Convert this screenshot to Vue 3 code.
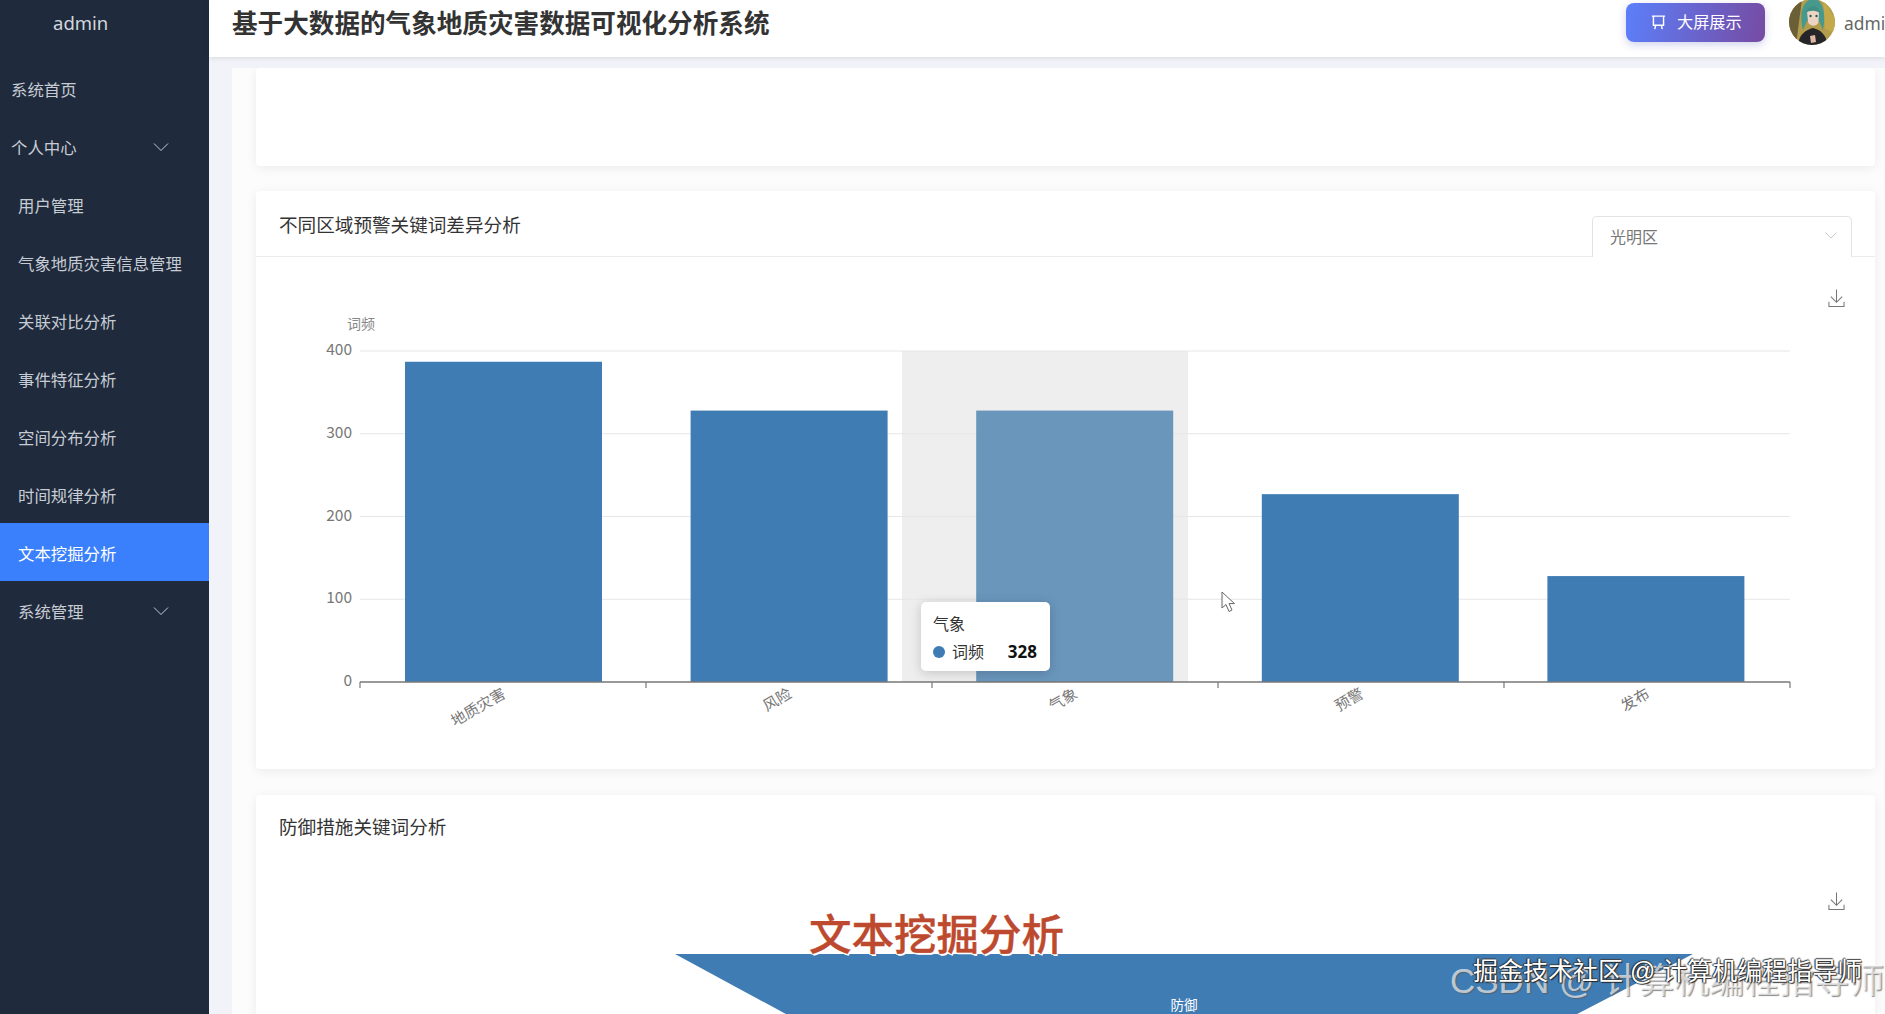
<template>
    <div class="layout">
        <aside class="sidebar">
            <div class="brand">admin</div>
            <ul class="menu">
                <li v-for="item in menuList" :key="item.text" class="menu-item"
                    :class="{ active: item.active, top: item.top }">
                    <span>{{ item.text }}</span>
                    <svg v-if="item.arrow" class="arrow" viewBox="0 0 16 10">
                        <path d="M1 1.5 L8 8.5 L15 1.5" fill="none" stroke="currentColor" stroke-width="1" />
                    </svg>
                </li>
            </ul>
        </aside>

        <div class="main">
            <header class="topbar">
                <h1 class="system-title">基于大数据的气象地质灾害数据可视化分析系统</h1>
                <div class="topbar-right">
                    <button class="screen-btn">
                        <svg class="screen-icon" viewBox="0 0 16 16">
                            <path d="M1 1.2 H15 M2.6 1.2 V11 H13.4 V1.2 M5 11 L4 15 M11 11 L12 15" fill="none"
                                stroke="#fff" stroke-width="1.5" />
                        </svg>
                        <span>大屏展示</span>
                    </button>
                    <svg class="avatar" viewBox="0 0 46 46">
                        <defs>
                            <clipPath id="avatar-clip">
                                <circle cx="23" cy="23" r="23" />
                            </clipPath>
                        </defs>
                        <g clip-path="url(#avatar-clip)">
                            <rect width="46" height="46" fill="#b39c4c" />
                            <path d="M0 0 H13 L7 46 H0 Z" fill="#6b5f38" />
                            <path d="M34 0 L46 20 V34 L36 30 Z" fill="#c4a94a" />
                            <path d="M14 31 C10 16 13 1 24 0 C35 0 37 16 34 31 L30 22 H18 Z" fill="#46998c" />
                            <path d="M18 12 C20 8 28 8 30 13 L29.5 23 C28 28 21 28 19 23 Z" fill="#ecd3c4" />
                            <path d="M16 14 C20 5 29 5 32 15 C27 11 22 11 16 14 Z" fill="#3f8f84" />
                            <circle cx="21.5" cy="17" r="1.2" fill="#2d5c55" />
                            <circle cx="27.5" cy="17" r="1.2" fill="#2d5c55" />
                            <path d="M9 46 C10 35 17 31 24 29 C32 31 37 36 39 46 Z" fill="#25252a" />
                            <path d="M21 37 L26 36 L27 43 L22 44 Z" fill="#dfb9a6" />
                        </g>
                    </svg>
                    <span class="username">admin</span>
                </div>
            </header>

            <div class="content">
                <div class="panel">
                    <section class="card card-empty"></section>

                    <section class="card card-bar">
                        <div class="card-header">
                            <span class="card-title">不同区域预警关键词差异分析</span>
                            <div class="select">
                                <span>光明区</span>
                                <svg class="select-arrow" viewBox="0 0 12 7">
                                    <path d="M0.5 0.5 L6 6 L11.5 0.5" fill="none" stroke="#c8c8c8" stroke-width="1" />
                                </svg>
                            </div>
                        </div>
                        <div class="chart">
                            <svg class="download" viewBox="0 0 18 19">
                                <path d="M9 0 V13 M3 7.5 L9 13.5 L15 7.5 M1 13 V18 H17 V13" fill="none"
                                    stroke="#777" stroke-width="1.1" />
                            </svg>
                            <svg class="bar-svg" width="1619" height="511" viewBox="0 0 1619 511">
                                <rect :x="646" :y="yOf(400)" width="286" :height="yOf(0) - yOf(400)" fill="#eeeeee" />
                                <line v-for="tick in ticks.slice(1)" :key="tick" :x1="axisLeft" :x2="axisRight"
                                    :y1="yOf(tick)" :y2="yOf(tick)" stroke="#e6e6e6" stroke-width="1" />
                                <text v-for="tick in ticks" :key="'y' + tick" :x="axisLeft - 8" :y="yOf(tick)"
                                    text-anchor="end" dominant-baseline="middle" class="axis-label">{{ tick }}</text>
                                <text x="105" y="68" text-anchor="middle" dominant-baseline="middle"
                                    class="axis-name">词频</text>
                                <rect v-for="(bar, index) in barList" :key="bar.name"
                                    :x="149 + index * barStep" :y="yOf(bar.value)" width="197"
                                    :height="yOf(0) - yOf(bar.value)" :fill="bar.active ? '#6a96bc' : '#3f7cb3'" />
                                <line :x1="axisLeft" :x2="axisRight" :y1="yOf(0)" :y2="yOf(0)" stroke="#777"
                                    stroke-width="1.4" />
                                <line v-for="n in 6" :key="'t' + n" :x1="axisLeft + (n - 1) * bandWidth"
                                    :x2="axisLeft + (n - 1) * bandWidth" :y1="yOf(0)" :y2="yOf(0) + 6" stroke="#777"
                                    stroke-width="1.2" />
                                <text v-for="(bar, index) in barList" :key="'x' + bar.name"
                                    :x="labelX(index)" :y="yOf(0) + 3" text-anchor="end"
                                    dominant-baseline="hanging" class="axis-label x-label"
                                    :transform="`rotate(-30 ${labelX(index)} ${yOf(0) + 3})`">{{ bar.name }}</text>
                            </svg>
                            <div class="tooltip">
                                <div class="tooltip-title">气象</div>
                                <div class="tooltip-row">
                                    <i class="tooltip-dot"></i>
                                    <span>词频</span>
                                    <b>328</b>
                                </div>
                            </div>
                            <svg class="cursor" viewBox="0 0 15 22">
                                <path d="M1 1 V17 L5 13.5 L8 20.5 L11 19 L8 12.6 H13.5 Z" fill="#fff" stroke="#666"
                                    stroke-width="1" />
                            </svg>
                        </div>
                    </section>

                    <section class="card card-funnel">
                        <div class="card-header plain">
                            <span class="card-title">防御措施关键词分析</span>
                        </div>
                        <div class="chart">
                            <svg class="download" viewBox="0 0 18 19">
                                <path d="M9 0 V13 M3 7.5 L9 13.5 L15 7.5 M1 13 V18 H17 V13" fill="none"
                                    stroke="#777" stroke-width="1.1" />
                            </svg>
                            <svg class="funnel-svg" width="1619" height="300" viewBox="0 0 1619 300">
                                <polygon points="419,94 1437,94 1157,239 687,239" fill="#3f7cb3" />
                                <text x="928" y="146" text-anchor="middle" dominant-baseline="middle"
                                    class="funnel-label">防御</text>
                            </svg>
                        </div>
                    </section>
                </div>
            </div>
        </div>

        <div class="video-caption">文本挖掘分析</div>
        <div class="mark mark-csdn">CSDN @ 计算机编程指导师</div>
        <div class="mark mark-juejin">掘金技术社区 @ 计算机编程指导师</div>
    </div>
</template>

<script setup>
import { ref } from 'vue'

const menuList = ref([
    { text: '系统首页', top: true },
    { text: '个人中心', top: true, arrow: true },
    { text: '用户管理' },
    { text: '气象地质灾害信息管理' },
    { text: '关联对比分析' },
    { text: '事件特征分析' },
    { text: '空间分布分析' },
    { text: '时间规律分析' },
    { text: '文本挖掘分析', active: true },
    { text: '系统管理', arrow: true },
])

const barList = ref([
    { name: '地质灾害', value: 387 },
    { name: '风险', value: 328 },
    { name: '气象', value: 328, active: true },
    { name: '预警', value: 227 },
    { name: '发布', value: 128 },
])

const ticks = [0, 100, 200, 300, 400]
const axisLeft = 104
const axisRight = 1534
const bandWidth = 286
const barStep = 285.6

// 图表内坐标: 0 轴 y=425, 400 轴 y=94
const yOf = (value) => 425 - (value / 400) * 331
const labelX = (index) => axisLeft + bandWidth / 2 - 3 + index * bandWidth
</script>

<style scoped>
.layout {
    position: relative;
    display: flex;
    width: 1885px;
    height: 1014px;
    overflow: hidden;
    font-family: "Noto Sans CJK SC", "Noto Sans", sans-serif;
}

.sidebar {
    flex: 0 0 209px;
    min-width: 0;
    background: #1f2a3c;
    color: #c7ccd4;
}

.brand {
    height: 59px;
    padding: 9px 0 0 53px;
    box-sizing: border-box;
    font-family: "Noto Sans", sans-serif;
    font-size: 18.5px;
    line-height: 28px;
    color: #d3d7de;
}

.menu {
    list-style: none;
    margin: 0;
    padding: 0;
}

.menu-item {
    display: flex;
    align-items: center;
    justify-content: space-between;
    height: 58px;
    box-sizing: border-box;
    padding: 1px 40px 0 18px;
    font-size: 16.4px;
    white-space: nowrap;
}

.menu-item.top {
    padding-left: 11px;
}

.menu-item.active {
    background: #3a7ffb;
    color: #fff;
}

.arrow {
    width: 16px;
    height: 10px;
}

.main {
    flex: 1;
    min-width: 0;
    display: flex;
    flex-direction: column;
    background: #f1f3f8;
}

.topbar {
    flex: 0 0 57px;
    display: flex;
    align-items: flex-start;
    justify-content: space-between;
    background: #fff;
    box-shadow: 0 1px 5px rgba(0, 0, 0, 0.1);
    position: relative;
    z-index: 1;
    overflow: hidden;
}

.system-title {
    margin: 4px 0 0 23px;
    font-size: 25.6px;
    line-height: 36px;
    font-weight: 700;
    color: #333;
}

.topbar-right {
    flex: 0 0 259px;
    min-width: 0;
    display: flex;
    align-items: flex-start;
    padding-top: 3px;
    box-sizing: border-box;
    white-space: nowrap;
}

.screen-btn {
    display: flex;
    flex: none;
    align-items: center;
    gap: 11px;
    width: 139px;
    height: 39px;
    margin-right: 24px;
    padding: 0 0 3px 25px;
    border: none;
    border-radius: 8px;
    background: linear-gradient(100deg, #5c7ffa, #764ba2);
    box-shadow: 0 3px 8px rgba(102, 110, 200, 0.3);
    color: #fff;
    font-family: inherit;
    font-size: 16.2px;
}

.screen-icon {
    width: 15px;
    height: 15px;
    flex: none;
    margin-top: 3px;
}

.avatar {
    flex: none;
    width: 46px;
    height: 46px;
    margin-top: -4px;
}

.username {
    margin: 7px 0 0 9px;
    font-family: "Noto Sans", sans-serif;
    font-size: 17.4px;
    line-height: 26px;
    color: #666;
}

.content {
    flex: 1;
    min-height: 0;
    padding: 11px 0 0 23px;
}

.panel {
    height: 100%;
    box-sizing: border-box;
    padding: 0 10px 0 24px;
    background: #fcfcfd;
    overflow: hidden;
}

.card {
    background: #fff;
    border-radius: 4px;
    box-shadow: 0 2px 12px rgba(0, 0, 0, 0.07);
}

.card-empty {
    height: 98px;
    margin-bottom: 25px;
}

.card-bar {
    height: 578px;
    margin-bottom: 26px;
}

.card-funnel {
    height: 360px;
}

.card-header {
    display: flex;
    align-items: flex-start;
    justify-content: space-between;
    height: 66px;
    box-sizing: border-box;
    padding: 20px 23px 0;
    border-bottom: 1px solid #ececec;
}

.card-header.plain {
    border-bottom: none;
    height: 65px;
    padding-top: 18px;
}

.card-title {
    font-size: 18.6px;
    line-height: 26px;
    color: #333;
}

.select {
    display: flex;
    align-items: center;
    justify-content: space-between;
    width: 260px;
    height: 41px;
    margin-top: 5px;
    box-sizing: border-box;
    padding: 0 14px 3px 17px;
    border: 1px solid #e3e3e6;
    border-bottom: none;
    border-radius: 5px 5px 0 0;
    background: #fff;
    font-size: 16px;
    color: #777;
}

.select-arrow {
    width: 12px;
    height: 7px;
}

.chart {
    position: relative;
}

.bar-svg,
.funnel-svg {
    display: block;
}

.axis-label {
    font-size: 15.5px;
    fill: #777;
}

.x-label {
    font-size: 15px;
}

.axis-name {
    font-size: 14px;
    fill: #888;
}

.funnel-label {
    font-size: 13.5px;
    fill: #fff;
}

.download {
    position: absolute;
    right: 30px;
    top: 32px;
    width: 17px;
    height: 19px;
}

.tooltip {
    position: absolute;
    left: 665px;
    top: 345px;
    width: 129px;
    height: 69px;
    box-sizing: border-box;
    padding: 10px 13px 0 12px;
    border-radius: 5px;
    background: #fff;
    box-shadow: 0 2px 12px rgba(0, 0, 0, 0.18);
    font-size: 16px;
    color: #333;
}

.tooltip-title {
    line-height: 23px;
}

.tooltip-row {
    display: flex;
    align-items: center;
    margin-top: 5px;
    line-height: 23px;
}

.tooltip-dot {
    width: 12px;
    height: 12px;
    margin-right: 7px;
    border-radius: 50%;
    background: #3f7cb3;
}

.tooltip-row b {
    margin-left: auto;
    font-family: "Open Sans", sans-serif;
    font-size: 17px;
    color: #111;
}

.cursor {
    position: absolute;
    left: 965px;
    top: 334px;
    width: 15px;
    height: 22px;
}

.video-caption {
    position: absolute;
    left: 809px;
    top: 902px;
    font-size: 42.5px;
    line-height: 60px;
    font-weight: 500;
    color: #bd4a2e;
    -webkit-text-stroke: 0.4px #bd4a2e;
    text-shadow: 1px 2px 0 #fff, -1px 1px 0 #fff;
    white-space: nowrap;
}

.mark {
    position: absolute;
    white-space: nowrap;
}

.mark-csdn {
    left: 1450px;
    top: 956px;
    font-family: "Liberation Sans", "Noto Sans CJK SC", sans-serif;
    font-size: 35px;
    line-height: 50px;
    color: rgba(255, 255, 255, 0.65);
    text-shadow: 1px 1px 1px rgba(90, 90, 90, 0.7);
}

.mark-juejin {
    left: 1473px;
    top: 954px;
    font-family: "Liberation Sans", "Noto Sans CJK SC", sans-serif;
    font-size: 25px;
    line-height: 34px;
    color: #fff;
    text-shadow: 1px 1px 1px #222, -1px 0 1px #222, 0 -1px 1px #444;
}
</style>

<style>
html,
body {
    margin: 0;
    overflow: hidden;
}
</style>
